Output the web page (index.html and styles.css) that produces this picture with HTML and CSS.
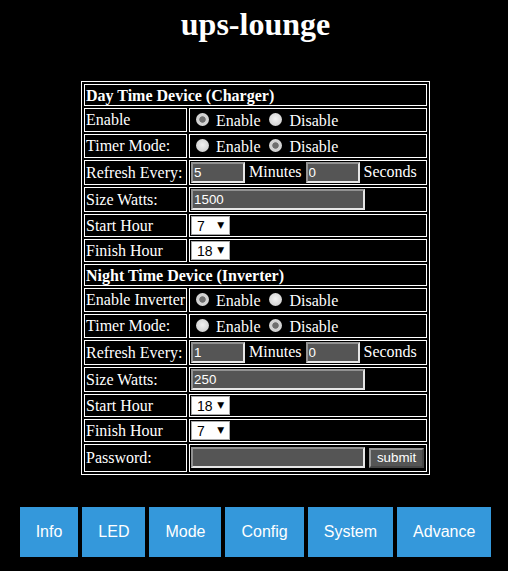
FILE: index.html
```html
<!DOCTYPE html>
<html>
<head>
<meta charset="utf-8">
<title>ups-lounge</title>
<link rel="stylesheet" href="styles.css">
</head>
<body>
<div class="page">
  <h1 class="title">ups-lounge</h1>
  <form class="form">
    <table class="grid">
      <tr><td colspan="2" class="head">Day Time Device (Charger)</td></tr>
      <tr><td>Enable</td><td><input type="radio" class="radio" name="de" checked> Enable <input type="radio" class="radio" name="de"> Disable</td></tr>
      <tr><td>Timer Mode:</td><td><input type="radio" class="radio" name="dt"> Enable <input type="radio" class="radio" name="dt" checked> Disable</td></tr>
      <tr><td>Refresh Every:</td><td><input class="field short" value="5"> Minutes <input class="field short" value="0"> Seconds</td></tr>
      <tr><td>Size Watts:</td><td><input class="field long" value="1500"></td></tr>
      <tr><td>Start Hour</td><td><span class="sel"><select class="select"><option>7</option></select></span></td></tr>
      <tr><td>Finish Hour</td><td><span class="sel"><select class="select"><option>18</option></select></span></td></tr>
      <tr><td colspan="2" class="head">Night Time Device (Inverter)</td></tr>
      <tr><td>Enable Inverter</td><td><input type="radio" class="radio" name="ne" checked> Enable <input type="radio" class="radio" name="ne"> Disable</td></tr>
      <tr><td>Timer Mode:</td><td><input type="radio" class="radio" name="nt"> Enable <input type="radio" class="radio" name="nt" checked> Disable</td></tr>
      <tr><td>Refresh Every:</td><td><input class="field short" value="1"> Minutes <input class="field short" value="0"> Seconds</td></tr>
      <tr><td>Size Watts:</td><td><input class="field long" value="250"></td></tr>
      <tr><td>Start Hour</td><td><span class="sel"><select class="select"><option>18</option></select></span></td></tr>
      <tr><td>Finish Hour</td><td><span class="sel"><select class="select"><option>7</option></select></span></td></tr>
      <tr class="pass"><td>Password:</td><td><input type="password" class="field long"> <button type="button" class="submit">submit</button></td></tr>
    </table>
  </form>
  <nav class="nav">
    <a class="btn">Info</a>
    <a class="btn">LED</a>
    <a class="btn">Mode</a>
    <a class="btn">Config</a>
    <a class="btn">System</a>
    <a class="btn">Advance</a>
  </nav>
</div>
</body>
</html>
```
FILE: styles.css
```css
html, body {
  margin: 0;
  background: #000;
}
.page {
  padding-left: 3px;
  color: #fff;
  font-family: "Liberation Serif", "Times New Roman", serif;
  font-size: 16px;
}
.title {
  margin: 6px 0 0;
  text-align: center;
  font-size: 32px;
  font-weight: bold;
  line-height: 37px;
}
.form {
  margin: 38px 0 0;
}
.grid {
  margin: 0 auto;
  width: 349px;
  border: 1px solid #fff;
  border-spacing: 2px;
  color: #fff;
}
.grid td {
  border: 1px solid #fff;
  padding: 1px;
  white-space: nowrap;
}
.grid td:first-child {
  width: 1%;
}
.grid td.head {
  font-weight: bold;
  padding: 2px 1px 0;
}
.grid .pass td {
  padding: 2px 1px 3px;
}
.radio {
  appearance: none;
  -webkit-appearance: none;
  width: 13px;
  height: 13px;
  margin: 3px 3px 0 5px;
  border-radius: 50%;
  background: radial-gradient(circle at 50% 45%, #f2f2f2 0, #d4d4d4 70%, #bdbdbd 100%);
  vertical-align: baseline;
}
.radio:checked {
  background: radial-gradient(circle, #6e6e6e 0, #6e6e6e 2.8px, #d0d0d0 3.6px, #dcdcdc 100%);
}
.field {
  box-sizing: border-box;
  height: 21px;
  background: #555;
  color: #fff;
  border: 2px inset #e6e6e6;
  padding: 1px 1px;
  font-family: "Liberation Sans", Arial, sans-serif;
  font-size: 13.33px;
  margin: 0;
}
.short { width: 54px; }
.long { width: 174px; }
.submit {
  box-sizing: border-box;
  width: 55px;
  height: 20px;
  background: #555;
  color: #fff;
  border: 2px outset #9a9a9a;
  font-family: "Liberation Sans", Arial, sans-serif;
  font-size: 13.33px;
  padding: 0;
  margin: 0;
}
.sel {
  position: relative;
  display: inline-block;
  vertical-align: top;
}
.select {
  appearance: none;
  -webkit-appearance: none;
  display: block;
  box-sizing: border-box;
  width: 39px;
  height: 19px;
  background: #fff;
  color: #000;
  border: 1px solid #a9a9a9;
  border-radius: 0;
  padding: 0 0 0 5px;
  font-family: "Liberation Sans", Arial, sans-serif;
  font-size: 14px;
  margin: 0;
}
.sel::after {
  content: "\25BC";
  position: absolute;
  right: 6px;
  top: 5px;
  font-size: 9px;
  line-height: 9px;
  color: #000;
  font-family: "DejaVu Sans", sans-serif;
  pointer-events: none;
}
.nav {
  display: flex;
  justify-content: center;
  gap: 4px;
  margin-top: 32px;
}
.btn {
  display: block;
  background: #3498db;
  color: #fff;
  padding: 16px;
  font-family: "Liberation Sans", Arial, sans-serif;
  font-size: 16px;
  line-height: 18px;
}
```
